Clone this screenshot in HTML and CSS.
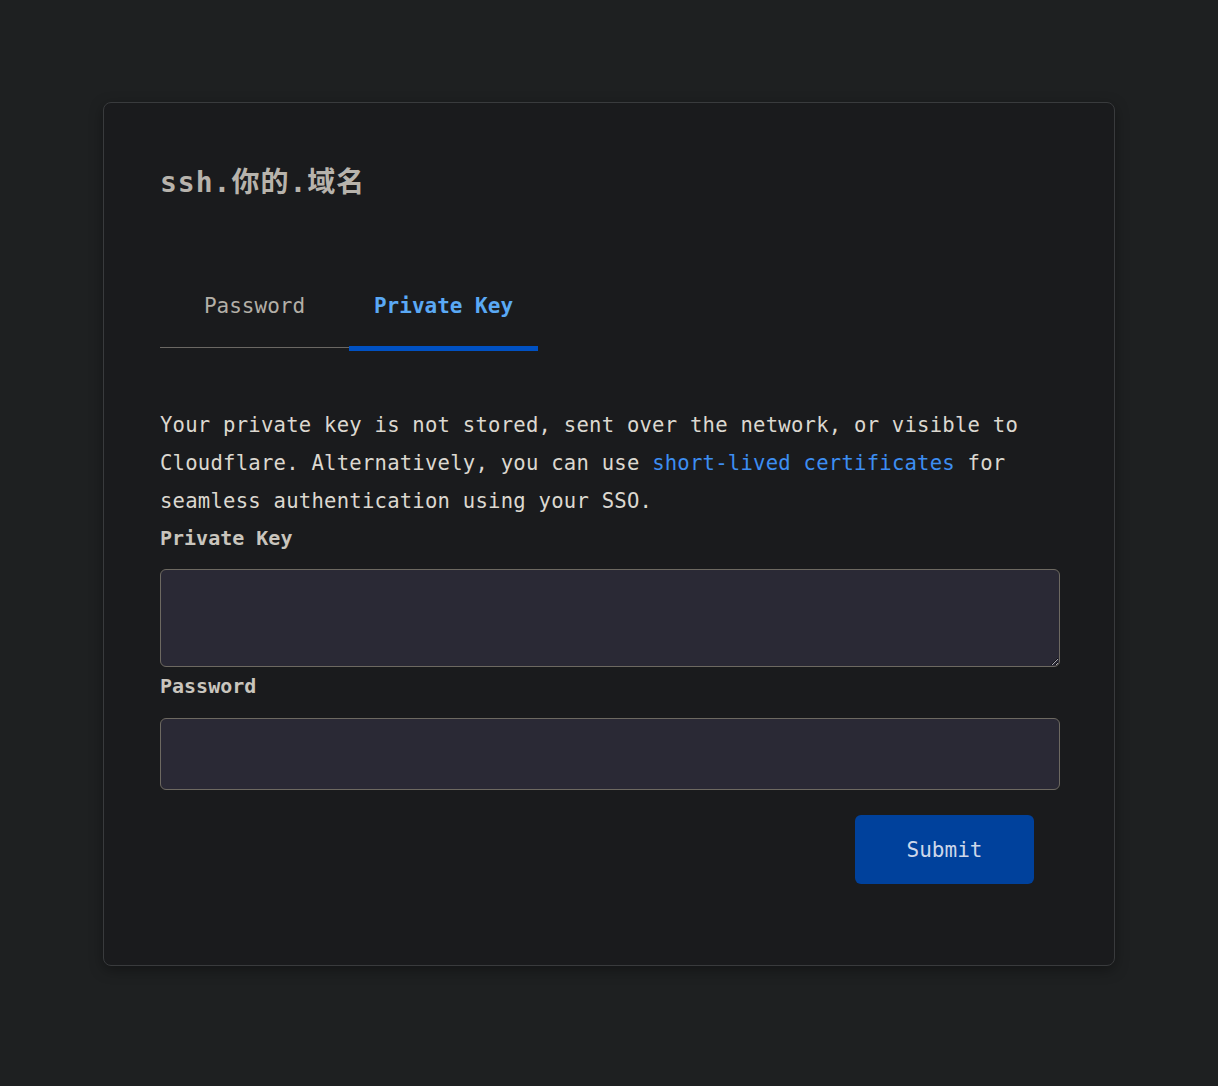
FILE: index.html
```html
<!DOCTYPE html>
<html lang="en">
<head>
<meta charset="utf-8">
<title>ssh.你的.域名</title>
<link rel="stylesheet" href="styles.css">
</head>
<body>
<main class="card">
  <h1 class="title">ssh.你的.域名</h1>
  <div class="tabs" role="tablist">
    <button class="tab" role="tab" type="button">Password</button>
    <button class="tab tab-active" role="tab" type="button">Private Key</button>
  </div>
  <p class="intro">Your private key is not stored, sent over the network, or visible to Cloudflare. Alternatively, you can use <a class="link" href="#">short-lived certificates</a> for seamless authentication using your SSO.</p>
  <form class="form">
    <label class="label label-key" for="pk">Private Key</label>
    <textarea id="pk" class="field textarea"></textarea>
    <label class="label label-pw" for="pw">Password</label>
    <input id="pw" class="field input" type="password">
    <div class="actions">
      <button class="submit" type="submit">Submit</button>
    </div>
  </form>
</main>
</body>
</html>
```
FILE: styles.css
```css
html, body {
  margin: 0;
  padding: 0;
}
body {
  background: #1e2021;
  color-scheme: dark;
  font-family: "DejaVu Sans Mono", "Noto Sans CJK SC", monospace;
  color: #dcd8d0;
  padding-top: 102px;
  min-height: 1086px;
  box-sizing: border-box;
}
.card {
  width: 1012px;
  box-sizing: border-box;
  margin: 0 auto;
  background: #1a1b1d;
  border: 1px solid #393b3d;
  border-radius: 8px;
  padding: 56px 54px 56px 56px;
  box-shadow: 0 4px 14px rgba(0, 0, 0, 0.35);
}
.title {
  margin: 0;
  font-size: 28px;
  line-height: 48px;
  font-weight: bold;
  color: #b7b3ac;
  letter-spacing: 1px;
}
.tabs {
  display: flex;
  align-items: flex-start;
  margin-top: 59px;
}
.tab {
  width: 189px;
  background: none;
  border: 0;
  border-bottom: 1px solid #6b6864;
  padding: 28px 0 29px;
  font-family: inherit;
  font-size: 21px;
  line-height: 24px;
  color: #b3afa7;
  text-align: center;
  cursor: pointer;
}
.tab-active {
  font-weight: bold;
  color: #5aa9f5;
  border-bottom: 5px solid #0051c3;
  padding-bottom: 28px;
}
.intro {
  margin: 55px 0 0;
  font-size: 20.6px;
  line-height: 38px;
  letter-spacing: 0.22px;
  color: #dcd8d0;
}
.link {
  color: #3d8ef2;
  text-decoration: none;
}
.form {
  display: flex;
  flex-direction: column;
}
.label {
  display: block;
  font-size: 20px;
  line-height: 26px;
  font-weight: bold;
  color: #c9c5bd;
}
.label-key {
  margin-top: 5px;
  margin-bottom: 18px;
}
.label-pw {
  margin-top: 6px;
  margin-bottom: 19px;
}
.field {
  display: block;
  width: 900px;
  box-sizing: border-box;
  background: #2a2935;
  border: 1px solid #6d6961;
  border-radius: 6px;
  color: #dcd8d0;
  font-family: inherit;
  font-size: 20px;
  margin: 0;
  outline: none;
}
.textarea {
  height: 98px;
  padding: 8px 12px;
  resize: vertical;
}
.input {
  height: 72px;
  padding: 0 12px;
}
.actions {
  display: flex;
  justify-content: flex-end;
}
.submit {
  margin: 25px 26px 25px 0;
  width: 179px;
  height: 69px;
  background: #00419c;
  border: 0;
  border-radius: 6px;
  color: #cdd7ea;
  font-family: inherit;
  font-size: 21px;
  cursor: pointer;
}
```
